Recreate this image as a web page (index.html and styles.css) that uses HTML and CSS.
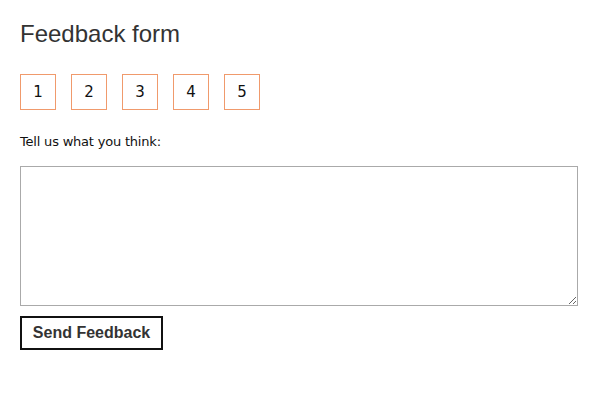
FILE: index.html
```html
<!DOCTYPE html>
<html>
<head>
<meta charset="utf-8">
<link rel="stylesheet" href="styles.css">
</head>
<body>
<h1 class="title">Feedback form</h1>
<div class="ratings">
  <button class="rate">1</button>
  <button class="rate">2</button>
  <button class="rate">3</button>
  <button class="rate">4</button>
  <button class="rate">5</button>
</div>
<p class="label">Tell us what you think:</p>
<textarea class="comments"></textarea>
<button class="send">Send Feedback</button>
</body>
</html>
```

FILE: styles.css
```css
html, body {
  margin: 0;
  background: #fff;
}
body {
  padding: 20px;
  font-family: "DejaVu Sans", sans-serif;
}
.title {
  margin: 0 0 26px;
  font-family: "Liberation Sans", Arial, sans-serif;
  font-weight: normal;
  font-size: 24px;
  color: #333;
}
.ratings {
  display: flex;
  gap: 15px;
}
.rate {
  width: 36px;
  height: 36px;
  padding: 0;
  margin: 0;
  background: #fff;
  border: 1px solid #f09a6c;
  font-family: "DejaVu Sans", sans-serif;
  font-size: 15px;
  color: #111;
}
.label {
  margin: 24px 0 0;
  font-size: 13px;
  letter-spacing: -0.2px;
  color: #111;
  line-height: 16px;
}
.comments {
  display: block;
  box-sizing: border-box;
  margin: 16px 0 0;
  width: 558px;
  height: 140px;
  border: 1px solid #aaa;
  padding: 2px;
}
.send {
  display: block;
  margin: 10px 0 0;
  box-sizing: border-box;
  width: 143px;
  height: 34px;
  padding: 0;
  background: #fff;
  border: 2px solid #111;
  font-family: "Liberation Sans", Arial, sans-serif;
  font-weight: bold;
  font-size: 16px;
  color: #333;
}
```
